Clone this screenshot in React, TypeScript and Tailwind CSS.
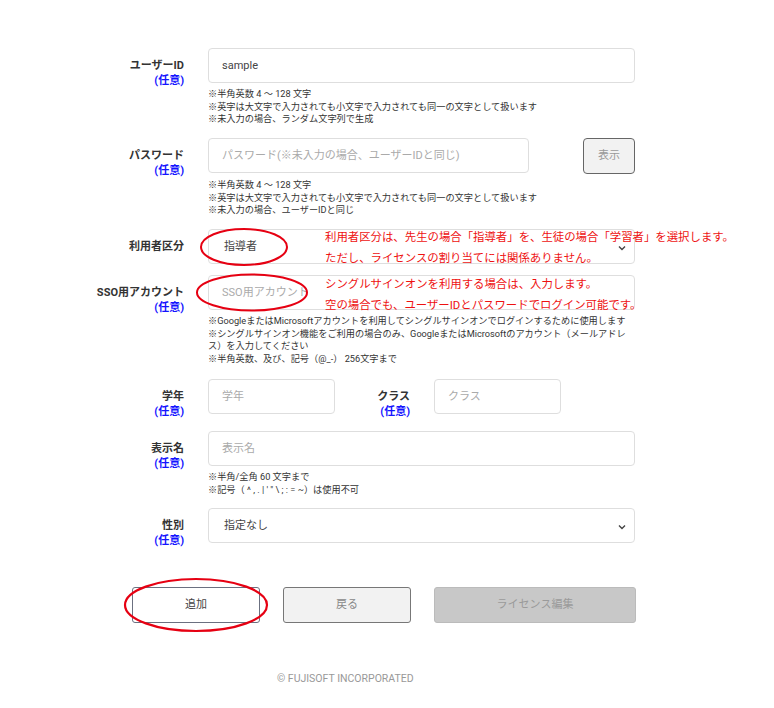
import React from "react";

const FONT = "font-['Roboto','Noto_Sans_CJK_JP',sans-serif]";

function Label({ text, optional = true }: { text: string; optional?: boolean }) {
  return (
    <div className="w-[184px] shrink-0 text-right pt-[10px] text-[11px] font-bold leading-[15px] text-[#333]">
      <div>{text}</div>
      {optional && <div className="text-[#1414ff]">(任意)</div>}
    </div>
  );
}

function Notes({ lines }: { lines: string[] }) {
  return (
    <div className="mt-[5px] text-[9.2px] leading-[12.7px] text-[#333] whitespace-nowrap">
      {lines.map((l, i) => (
        <div key={i}>{l}</div>
      ))}
    </div>
  );
}

function TextBox({ value, placeholder, w = "w-[427px]" }: { value?: string; placeholder?: string; w?: string }) {
  return (
    <div
      className={`${w} h-[35px] rounded-[4px] border border-[#dedede] bg-white pl-[13px] pt-[1px] flex items-center text-[11px]`}
    >
      {value ? <span className="text-[#444]">{value}</span> : <span className="text-[#aaa]">{placeholder}</span>}
    </div>
  );
}

function SelectBox({ value }: { value: string }) {
  return (
    <div className="w-[427px] h-[35px] rounded-[4px] border border-[#dedede] bg-white pl-[15px] pr-[8px] pt-[1px] flex items-center justify-between text-[11px] text-[#444]">
      <span>{value}</span>
      <svg width="8" height="6" viewBox="0 0 8 6" className="mt-[1px]">
        <path d="M1 1.5 L4 4.5 L7 1.5" fill="none" stroke="#444" strokeWidth="1.4" />
      </svg>
    </div>
  );
}

export default function App() {
  return (
    <div className={`relative w-[774px] h-[708px] bg-white ${FONT}`}>
      <div className="pt-[48px]">
        {/* ユーザーID */}
        <div className="flex h-[90px]">
          <Label text="ユーザーID" />
          <div className="ml-[24px]">
            <TextBox value="sample" />
            <Notes
              lines={[
                "※半角英数 4 ～ 128 文字",
                "※英字は大文字で入力されても小文字で入力されても同一の文字として扱います",
                "※未入力の場合、ランダム文字列で生成",
              ]}
            />
          </div>
        </div>

        {/* パスワード */}
        <div className="flex h-[91px]">
          <Label text="パスワード" />
          <div className="ml-[24px] w-[427px]">
            <div className="flex items-start justify-between">
              <TextBox w="w-[321px]" placeholder="パスワード(※未入力の場合、ユーザーIDと同じ)" />
              <div className="w-[52px] h-[36px] rounded-[4px] border border-[#666] bg-[#f2f2f2] flex items-center justify-center text-[11px] text-[#999]">
                表示
              </div>
            </div>
            <Notes
              lines={[
                "※半角英数 4 ～ 128 文字",
                "※英字は大文字で入力されても小文字で入力されても同一の文字として扱います",
                "※未入力の場合、ユーザーIDと同じ",
              ]}
            />
          </div>
        </div>

        {/* 利用者区分 */}
        <div className="flex h-[46px]">
          <Label text="利用者区分" optional={false} />
          <div className="ml-[24px]">
            <SelectBox value="指導者" />
          </div>
        </div>

        {/* SSO用アカウント */}
        <div className="flex h-[104px]">
          <Label text="SSO用アカウント" />
          <div className="ml-[24px]">
            <TextBox placeholder="SSO用アカウント" />
            <Notes
              lines={[
                "※GoogleまたはMicrosoftアカウントを利用してシングルサインオンでログインするために使用します",
                "※シングルサインオン機能をご利用の場合のみ、GoogleまたはMicrosoftのアカウント（メールアドレ",
                "ス）を入力してください",
                "※半角英数、及び、記号（@_-） 256文字まで",
              ]}
            />
          </div>
        </div>

        {/* 学年 / クラス */}
        <div className="flex h-[52px]">
          <Label text="学年" />
          <div className="ml-[24px]">
            <TextBox w="w-[127px]" placeholder="学年" />
          </div>
          <div className="w-[75px] shrink-0 text-right pt-[10px] text-[11px] font-bold leading-[15px] text-[#333]">
            <div>クラス</div>
            <div className="text-[#1414ff]">(任意)</div>
          </div>
          <div className="ml-[24px]">
            <TextBox w="w-[127px]" placeholder="クラス" />
          </div>
        </div>

        {/* 表示名 */}
        <div className="flex h-[77px]">
          <Label text="表示名" />
          <div className="ml-[24px]">
            <TextBox placeholder="表示名" />
            <Notes lines={["※半角/全角 60 文字まで", "※記号（ ^ , . | ' \" \\ ; : = ~）は使用不可"]} />
          </div>
        </div>

        {/* 性別 */}
        <div className="flex h-[79px]">
          <Label text="性別" />
          <div className="ml-[24px]">
            <SelectBox value="指定なし" />
          </div>
        </div>

        {/* Buttons */}
        <div className="flex pl-[132px] gap-[23px]">
          <div className="w-[128px] h-[36px] rounded-[3px] border border-[#6b7080] bg-white flex items-center justify-center text-[11px] text-[#444]">
            追加
          </div>
          <div className="w-[128px] h-[36px] rounded-[3px] border border-[#777] bg-[#f2f2f2] flex items-center justify-center text-[11px] text-[#888]">
            戻る
          </div>
          <div className="w-[202px] h-[36px] rounded-[3px] border border-[#bbb] bg-[#c8c8c8] flex items-center justify-center text-[11px] text-[#9a9a9a]">
            ライセンス編集
          </div>
        </div>

        <div className="mt-[49px] pl-[277px] text-[10.5px] leading-[14px] text-[#999]">© FUJISOFT INCORPORATED</div>
      </div>

      {/* Annotations (overlay) */}
      <svg className="absolute left-0 top-0 pointer-events-none" width="774" height="708">
        <ellipse cx="244" cy="247" rx="43" ry="18" fill="none" stroke="#e60012" strokeWidth="2" />
        <ellipse cx="252" cy="292.5" rx="55" ry="18" fill="none" stroke="#e60012" strokeWidth="2" />
        <ellipse cx="196" cy="605" rx="71" ry="26" fill="none" stroke="#e60012" strokeWidth="2.2" />
      </svg>
      <div className="absolute left-[325px] top-[227px] text-[11.4px] leading-[21px] text-[#ee1111] whitespace-nowrap">
        <div>利用者区分は、先生の場合「指導者」を、生徒の場合「学習者」を選択します。</div>
        <div>ただし、ライセンスの割り当てには関係ありません。</div>
      </div>
      <div className="absolute left-[325px] top-[274px] text-[11.4px] leading-[21px] text-[#ee1111] whitespace-nowrap">
        <div>シングルサインオンを利用する場合は、入力します。</div>
        <div>空の場合でも、ユーザーIDとパスワードでログイン可能です。</div>
      </div>
    </div>
  );
}
